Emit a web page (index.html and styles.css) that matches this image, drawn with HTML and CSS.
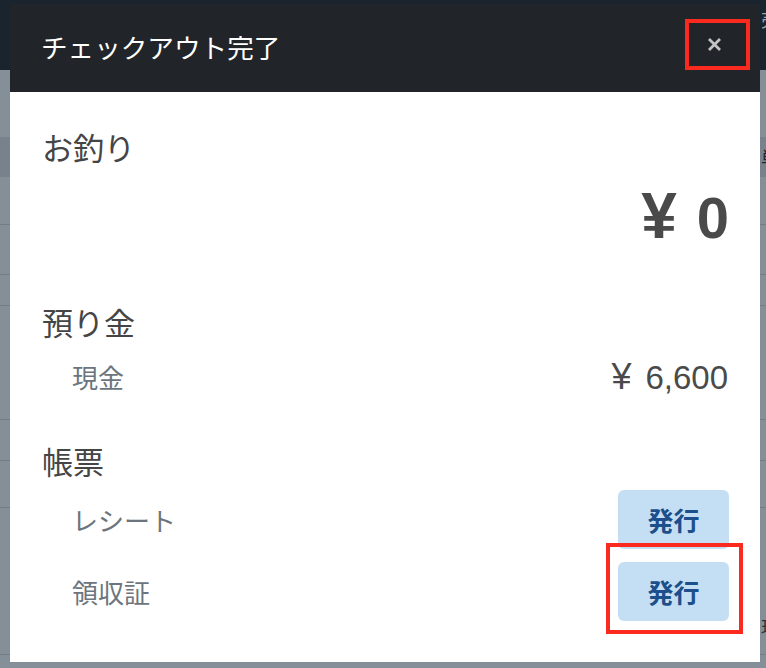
FILE: index.html
```html
<!DOCTYPE html>
<html lang="ja">
<head>
<meta charset="utf-8">
<title>チェックアウト完了</title>
<link rel="stylesheet" href="styles.css">
</head>
<body>
<div class="page">
  <div class="topbar">
    <span class="bg-cell"></span><span class="bg-clip"><span class="bg-text bg-text-light">売上</span></span>
  </div>
  <div class="bg-table">
    <div class="bg-row bg-row-gap"></div>
    <div class="bg-row bg-row-head"><span class="bg-cell"></span><span class="bg-clip"><span class="bg-text">単価</span></span></div>
    <div class="bg-row bg-r1"></div>
    <div class="bg-row bg-r2"></div>
    <div class="bg-row bg-r3"></div>
    <div class="bg-row bg-r4"></div>
    <div class="bg-row bg-r5"></div>
    <div class="bg-row bg-r6"></div>
    <div class="bg-row bg-r7"><span class="bg-cell"></span><span class="bg-clip"><span class="bg-text bg-text-low">現金</span></span></div>
  </div>
</div>

<div class="overlay">
  <div class="modal">
    <div class="modal-header">
      <h1 class="modal-title">チェックアウト完了</h1>
      <button class="close-btn" type="button" aria-label="閉じる">
        <svg width="15" height="15" viewBox="0 0 15 15" aria-hidden="true">
          <path d="M2 2 L13 13 M13 2 L2 13" stroke="#c4c4c4" stroke-width="2.8" stroke-linecap="butt" fill="none"/>
        </svg>
      </button>
    </div>
    <div class="modal-body">
      <section class="section">
        <h2 class="section-title">お釣り</h2>
        <div class="change-amount"><span class="yen">¥</span>0</div>
      </section>
      <section class="section section-deposit">
        <h2 class="section-title">預り金</h2>
        <div class="rows">
          <div class="row row-plain">
            <span class="row-label">現金</span>
            <span class="row-value"><span class="yen-sm">¥</span>6,600</span>
          </div>
        </div>
      </section>
      <section class="section section-docs">
        <h2 class="section-title">帳票</h2>
        <div class="rows rows-docs">
          <div class="row">
            <span class="row-label">レシート</span>
            <button class="issue-btn" type="button">発行</button>
          </div>
          <div class="row">
            <span class="row-label">領収証</span>
            <button class="issue-btn issue-btn-marked" type="button">発行</button>
          </div>
        </div>
      </section>
    </div>
  </div>
</div>
</body>
</html>
```

FILE: styles.css
```css
* { box-sizing: border-box; }

html, body {
  margin: 0;
  padding: 0;
  width: 766px;
  height: 668px;
  overflow: hidden;
  font-family: "Noto Sans CJK JP", "Liberation Sans", sans-serif;
}

/* ---------- dimmed page behind the dialog ---------- */
.page {
  height: 668px;
  background: #858f98;
}

.topbar {
  height: 70px;
  background: #19242f;
  display: grid;
  grid-template-columns: 761px 5px;
  align-items: start;
}

.bg-clip {
  display: block;
  width: 5px;
  overflow: hidden;
}

.bg-text {
  display: block;
  width: 40px;
  font-size: 18px;
  line-height: 22px;
  color: #1f2529;
  white-space: nowrap;
}

.bg-text-light {
  color: #9aa3ab;
  margin-top: 8px;
}

.bg-table {
  display: flex;
  flex-direction: column;
}

.bg-row {
  display: grid;
  grid-template-columns: 761px 5px;
  align-items: center;
  border-bottom: 1px solid #737d87;
}

.bg-row-gap { height: 67px; border-bottom: none; }
.bg-row-head { height: 40px; background: #78828c; border-bottom: none; }
.bg-r1 { height: 48px; }
.bg-r2 { height: 50px; }
.bg-r3 { height: 31px; }
.bg-r4 { height: 114px; }
.bg-r5 { height: 41px; }
.bg-r6 { height: 47px; }
.bg-r7 { height: 147px; align-items: end; }

.bg-text-low { margin-bottom: 16px; color: #2a3036; }

/* ---------- overlay & dialog ---------- */
.overlay {
  position: fixed;
  inset: 0;
  padding: 4px 6px 0 10px;
}

.modal {
  width: 750px;
  background: #ffffff;
  display: flex;
  flex-direction: column;
}

.modal-header {
  height: 88px;
  background: #212529;
  display: flex;
  justify-content: space-between;
  align-items: flex-start;
  padding: 0 10px 0 31px;
}

.modal-title {
  margin: 0;
  font-size: 26.6px;
  line-height: 39px;
  font-weight: 400;
  color: #ffffff;
  padding-top: 23px;
}

.close-btn {
  margin-top: 15px;
  width: 65px;
  height: 51px;
  padding: 0 7px 0 0;
  background: transparent;
  border: 4px solid #fb2a1e;
  display: flex;
  align-items: center;
  justify-content: center;
  cursor: pointer;
}

.close-btn svg { display: block; }

.modal-body {
  padding: 32px 31px 41px 32px;
  display: flex;
  flex-direction: column;
}

.section { display: flex; flex-direction: column; }
.section-deposit { margin-top: 51px; }
.section-docs { margin-top: 33px; }

.section-title {
  margin: 0;
  font-size: 31px;
  line-height: 46px;
  font-weight: 400;
  color: #454545;
}

.change-amount {
  margin-top: 14px;
  height: 64px;
  text-align: right;
  font-family: "Liberation Sans", "Noto Sans CJK JP", sans-serif;
  font-weight: 700;
  font-size: 58px;
  line-height: 64px;
  color: #4a4a4a;
}

.yen {
  font-size: 64px;
  margin-right: 20px;
}

.rows {
  margin-top: 4px;
  display: flex;
  flex-direction: column;
  gap: 13px;
}

.rows-docs { margin-top: 6px; }

.row {
  height: 59px;
  display: flex;
  justify-content: space-between;
  align-items: center;
  padding-left: 30px;
}

.row-plain { height: 56px; }

.row-label {
  font-size: 26px;
  line-height: 36px;
  color: #6c757d;
}

.row-value {
  font-family: "Liberation Sans", "Noto Sans CJK JP", sans-serif;
  font-size: 33px;
  line-height: 40px;
  color: #4a4a4a;
  padding-right: 1px;
}

.yen-sm {
  font-size: 36px;
  margin-right: 14px;
}

.issue-btn {
  position: relative;
  width: 111px;
  height: 59px;
  border: none;
  border-radius: 6px;
  background: #c4dff4;
  color: #1c4f8b;
  font-family: "Noto Sans CJK JP", sans-serif;
  font-size: 26px;
  font-weight: 700;
  line-height: 36px;
  padding: 0;
  cursor: pointer;
}

/* red annotation frame drawn over the second button */
.issue-btn-marked::after {
  content: "";
  position: absolute;
  left: -12px;
  right: -14px;
  top: -19px;
  bottom: -13px;
  border: 4px solid #fb2a1e;
  pointer-events: none;
}
```
